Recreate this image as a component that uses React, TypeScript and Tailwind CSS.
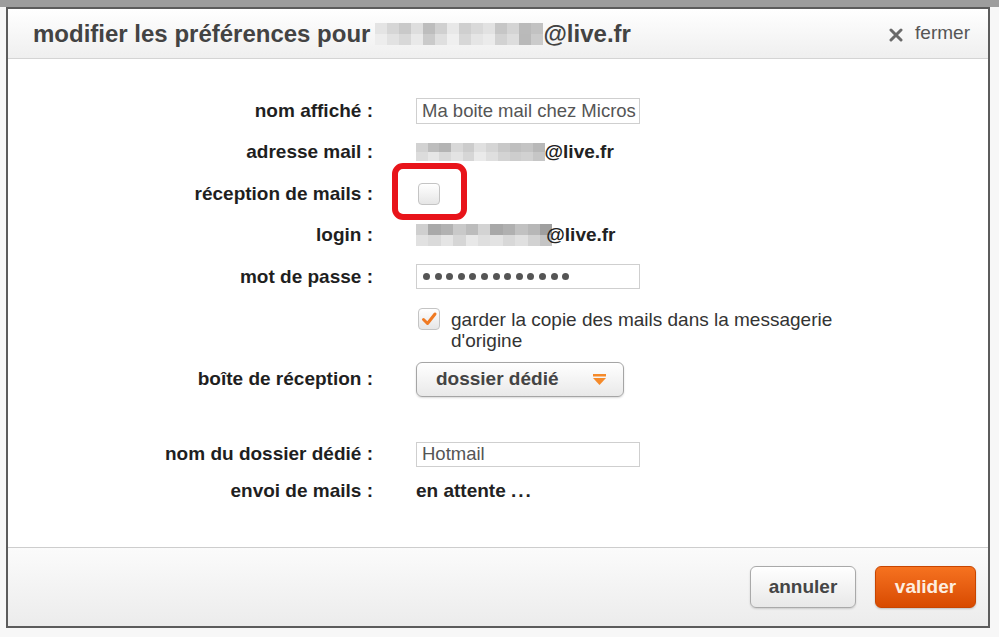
import React from 'react';

const font = { fontFamily: '"Liberation Sans", Arial, sans-serif' };

// pixelated "blurred" block standing in for a hidden address
const Mosaic = ({ top, bottom, cell }: { top: string[]; bottom: string[]; cell: string }) => {
    return (
        <div className="flex">
            {top.map((t, i) => (
                <div key={i} className="flex flex-col">
                    <div className={`${cell} ${t}`}></div>
                    <div className={`${cell} ${bottom[i]}`}></div>
                </div>
            ))}
        </div>
    );
};

const titleTop = ['bg-[#e4e4e4]', 'bg-[#d6d6d6]', 'bg-[#c9c9c9]', 'bg-[#dedede]', 'bg-[#bdbdbd]', 'bg-[#d0d0d0]', 'bg-[#e8e8e8]', 'bg-[#cfcfcf]', 'bg-[#d9d9d9]', 'bg-[#e2e2e2]', 'bg-[#c6c6c6]', 'bg-[#d4d4d4]', 'bg-[#bababa]', 'bg-[#c2c2c2]'];
const titleBot = ['bg-[#ededed]', 'bg-[#e2e2e2]', 'bg-[#d8d8d8]', 'bg-[#e9e9e9]', 'bg-[#cacaca]', 'bg-[#dfdfdf]', 'bg-[#efefef]', 'bg-[#d7d7d7]', 'bg-[#e5e5e5]', 'bg-[#ebebeb]', 'bg-[#d2d2d2]', 'bg-[#dddddd]', 'bg-[#b9b9b9]', 'bg-[#cbcbcb]'];
const mailTop = ['bg-[#d2d2d2]', 'bg-[#bdbdbd]', 'bg-[#b4b4b4]', 'bg-[#d8d8d8]', 'bg-[#cccccc]', 'bg-[#e0e0e0]', 'bg-[#d5d5d5]', 'bg-[#c8c8c8]', 'bg-[#bfbfbf]', 'bg-[#c4c4c4]', 'bg-[#b8b8b8]'];
const mailBot = ['bg-[#dcdcdc]', 'bg-[#e6e6e6]', 'bg-[#d9d9d9]', 'bg-[#e3e3e3]', 'bg-[#d6d6d6]', 'bg-[#eaeaea]', 'bg-[#dfdfdf]', 'bg-[#d3d3d3]', 'bg-[#cdcdcd]', 'bg-[#d1d1d1]', 'bg-[#c6c6c6]'];
const loginTop = ['bg-[#cfcfcf]', 'bg-[#a9a9a9]', 'bg-[#b2b2b2]', 'bg-[#c9c9c9]', 'bg-[#bcbcbc]', 'bg-[#d3d3d3]', 'bg-[#a8a8a8]', 'bg-[#b0b0b0]', 'bg-[#c1c1c1]', 'bg-[#b7b7b7]', 'bg-[#9f9f9f]'];
const loginBot = ['bg-[#e1e1e1]', 'bg-[#dadada]', 'bg-[#e5e5e5]', 'bg-[#d6d6d6]', 'bg-[#e8e8e8]', 'bg-[#dfdfdf]', 'bg-[#e3e3e3]', 'bg-[#d8d8d8]', 'bg-[#e0e0e0]', 'bg-[#d2d2d2]', 'bg-[#c4c4c4]'];

const Row = ({ label, children, className }: { label: string; children?: React.ReactNode; className: string }) => {
    return (
        <div className={`flex items-center ${className}`}>
            <div className="w-[365px] text-right font-bold text-[19px] text-[#1f1f1f]">{label}</div>
            <div className="ml-[43px] flex items-center">{children}</div>
        </div>
    );
};

const TextBox = ({ value, className }: { value: string; className: string }) => {
    return (
        <div className={`w-[224px] border border-[#cfcfcf] bg-white pl-[5px] text-[18.5px] text-[#555] whitespace-nowrap overflow-hidden flex items-center ${className}`}>
            {value}
        </div>
    );
};

const App = () => {
    return (
        <div style={font} className="w-[999px] h-[637px] overflow-hidden bg-[#f7f7f7] border-t-[7px] border-[#9d9d9d]">
            <div className="ml-[6px] w-[984px] h-[621px] border-2 border-[#5c5c5c] bg-white flex flex-col">
                {/* header */}
                <div className="h-[50px] border-b border-[#d4d4d4] bg-gradient-to-b from-white to-[#efefef] flex items-center pl-[25px] pr-[18px]">
                    <div className="flex items-center text-[24px] font-bold text-[#434343]">
                        <span>modifier les préférences pour</span>
                        <div className="ml-[5px]">
                            <Mosaic top={titleTop} bottom={titleBot} cell="w-[12px] h-[11px]" />
                        </div>
                        <span>@live.fr</span>
                    </div>
                    <div className="ml-auto flex items-center text-[19px] text-[#555]">
                        <svg width="14" height="14" viewBox="0 0 14 14" className="mr-[12px] mt-[2px]">
                            <path d="M2 2 L12 12 M12 2 L2 12" stroke="#6a6a6a" strokeWidth="3" strokeLinecap="round" />
                        </svg>
                        <span>fermer</span>
                    </div>
                </div>

                {/* body */}
                <div className="flex-1 pt-[31px]">
                    <Row label="nom affiché :" className="h-[41.5px]">
                        <TextBox value="Ma boite mail chez Micros" className="h-[26px]" />
                    </Row>
                    <Row label="adresse mail :" className="h-[41.5px]">
                        <Mosaic top={mailTop} bottom={mailBot} cell="w-[11.7px] h-[9px]" />
                        <span className="font-bold text-[19px] text-[#222]">@live.fr</span>
                    </Row>
                    <Row label="réception de mails :" className="h-[41.5px]">
                        <div className="relative ml-[2px]">
                            <div className="w-[22px] h-[22px] rounded-[4px] border border-[#c4c4c4] bg-gradient-to-b from-white to-[#e6e6e6]"></div>
                            <div className="absolute left-[-26px] top-[-20px] w-[75px] h-[57px] rounded-[11px] border-[6px] border-[#e8141a]"></div>
                        </div>
                    </Row>
                    <Row label="login :" className="h-[41.5px]">
                        <Mosaic top={loginTop} bottom={loginBot} cell="w-[12.4px] h-[11px]" />
                        <span className="font-bold text-[19px] text-[#222] ml-[-6px]">@live.fr</span>
                    </Row>
                    <Row label="mot de passe :" className="h-[41.5px]">
                        <div className="w-[224px] h-[25px] border border-[#cfcfcf] bg-white pl-[6px] flex items-center gap-[4.6px]">
                            {Array.from({ length: 13 }).map((_, i) => (
                                <div key={i} className="w-[7px] h-[7px] rounded-full bg-[#555]"></div>
                            ))}
                        </div>
                    </Row>

                    <div className="flex mt-[10px]">
                        <div className="w-[365px]"></div>
                        <div className="ml-[45px] flex items-start">
                            <div className="w-[22px] h-[22px] rounded-[4px] border border-[#c4c4c4] bg-gradient-to-b from-white to-[#e6e6e6] flex items-center justify-center">
                                <svg width="18" height="18" viewBox="0 0 18 18">
                                    <path d="M3.5 9.5 L7.5 13.5 L15 4" stroke="#f07a22" strokeWidth="3" fill="none" strokeLinecap="round" strokeLinejoin="round" />
                                </svg>
                            </div>
                            <div className="ml-[11px] mt-[1px] text-[19px] leading-[21px] text-[#333] whitespace-nowrap">
                                garder la copie des mails dans la messagerie
                                <br />
                                d'origine
                            </div>
                        </div>
                    </div>

                    <Row label="boîte de réception :" className="h-[35px] mt-[11px]">
                        <div className="w-[208px] h-[35px] rounded-[6px] border border-[#a5a5a5] bg-gradient-to-b from-white to-[#e9e9e9] shadow-[0_1px_2px_rgba(0,0,0,0.15)] flex items-center pl-[19px] pr-[17px]">
                            <span className="font-bold text-[19px] text-[#444]">dossier dédié</span>
                            <svg width="13" height="11" viewBox="0 0 13 11" className="ml-auto">
                                <rect x="0" y="0" width="13" height="2.5" fill="#f58a2a" />
                                <polygon points="0,4 13,4 6.5,11" fill="#f58a2a" />
                            </svg>
                        </div>
                    </Row>

                    <Row label="nom du dossier dédié :" className="h-[25px] mt-[45px]">
                        <TextBox value="Hotmail" className="h-[25px]" />
                    </Row>
                    <Row label="envoi de mails :" className="h-[42px] mt-[4px]">
                        <span className="font-bold text-[19px] text-[#222]">
                            en attente <span className="tracking-[2px]">...</span>
                        </span>
                    </Row>
                </div>

                {/* footer */}
                <div className="h-[79px] border-t border-[#cdcdcd] bg-gradient-to-b from-[#fbfbfb] to-[#ececec] flex items-start justify-end pt-[18px] pr-[12px] gap-[19px]">
                    <button className="w-[106px] h-[42px] rounded-[6px] border border-[#a9a9a9] bg-gradient-to-b from-white to-[#e8e8e8] shadow-[0_1px_2px_rgba(0,0,0,0.15)] font-bold text-[19px] text-[#454545]">
                        annuler
                    </button>
                    <button className="w-[101px] h-[42px] rounded-[6px] border border-[#c84500] bg-gradient-to-b from-[#f6721f] to-[#d84a00] shadow-[0_1px_2px_rgba(0,0,0,0.2)] font-bold text-[19px] text-[#fdeee0]">
                        valider
                    </button>
                </div>
            </div>
        </div>
    );
};

export default App;
